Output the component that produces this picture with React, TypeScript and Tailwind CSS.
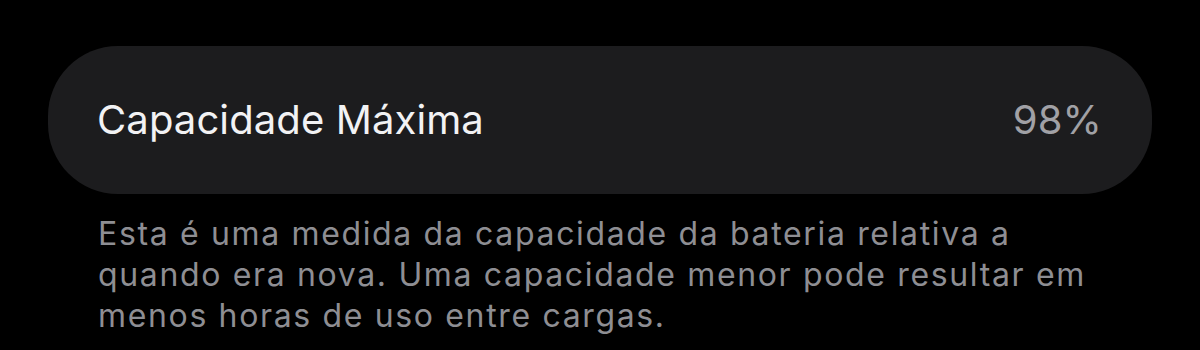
export default function App() {
  return (
    <div
      className="w-[1200px] h-[350px] bg-black overflow-hidden pt-[46px] px-[48px]"
      style={{ fontFamily: 'Inter, "Noto Sans", sans-serif' }}
    >
      {/* battery capacity row */}
      <div className="h-[148px] rounded-[70px] bg-[#1c1c1e] flex items-center justify-between pl-[49px] pr-[50px]">
        <span className="text-[40px] text-[#f2f2f4] tracking-[0.1px]">Capacidade Máxima</span>
        <span className="text-[40px] text-[#a1a1a6] tracking-[0.1px]">98%</span>
      </div>
      <p className="mt-[19px] pl-[50px] text-[32px] leading-[41px] text-[#8e8e93] tracking-[1.65px] whitespace-nowrap">
        Esta é uma medida da capacidade da bateria relativa a<br />
        quando era nova. Uma capacidade menor pode resultar em<br />
        menos horas de uso entre cargas.
      </p>
    </div>
  );
}
